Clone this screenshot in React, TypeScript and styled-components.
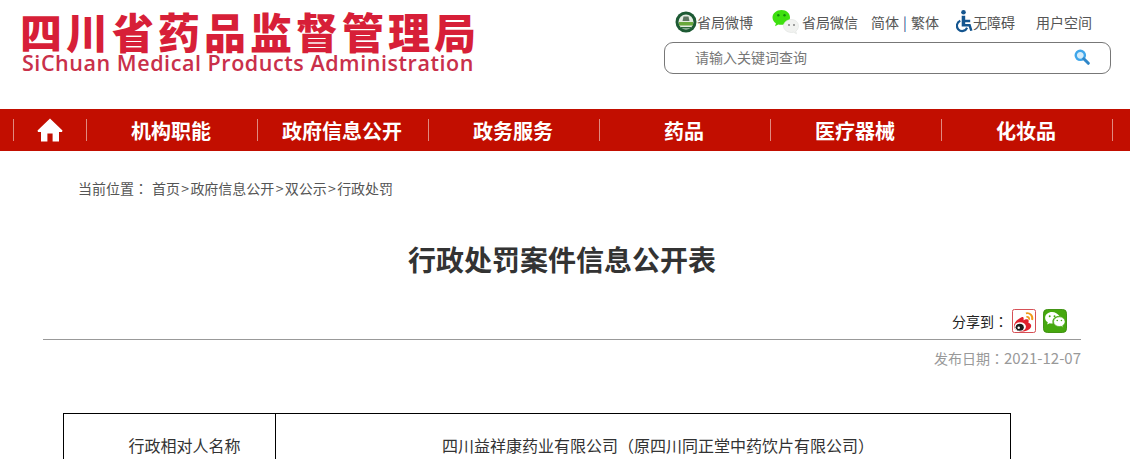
import React from 'react';
import styled, { createGlobalStyle } from 'styled-components';

const GlobalStyle = createGlobalStyle`
  html, body {
    margin: 0;
    padding: 0;
    background: #fff;
    overflow: hidden;
    font-family: "Noto Sans CJK SC", "Liberation Sans", sans-serif;
  }
`;

const Page = styled.div`
  width: 1130px;
  height: 459px;
  overflow: hidden;
`;

const Header = styled.header`
  height: 109px;
  display: flex;
  justify-content: space-between;
  padding: 13px 19px 0 20px;
  box-sizing: border-box;
`;

const Logo = styled.div`
  display: flex;
  flex-direction: column;
  color: #d71f38;
  white-space: nowrap;
`;

const LogoTitle = styled.div`
  font-size: 42px;
  line-height: 36px;
  font-weight: 900;
  letter-spacing: 4px;
`;

const LogoSub = styled.div`
  font-family: "Open Sans", sans-serif;
  font-size: 21.5px;
  line-height: 22px;
  font-weight: 600;
  letter-spacing: 0.55px;
  color: #c9304a;
  margin-top: 3px;
  padding-left: 2px;
`;

const Tools = styled.div`
  width: 447px;
  display: flex;
  flex-direction: column;
`;

const LinkRow = styled.div`
  height: 29px;
  padding-bottom: 12px;
  box-sizing: border-box;
  display: flex;
  align-items: center;
  font-size: 14px;
  color: #555;
  white-space: nowrap;
`;

const ToolLink = styled.span<{ $left: number; $gap?: number }>`
  display: flex;
  align-items: center;
  gap: ${(p) => p.$gap ?? 0}px;
  margin-left: ${(p) => p.$left}px;
`;

const Pipe = styled.span`
  color: #1f4e8c;
  width: 12px;
  text-align: center;
`;

const SearchBox = styled.div`
  height: 32px;
  box-sizing: border-box;
  border: 1px solid #777;
  border-radius: 9px;
  display: flex;
  align-items: center;
  justify-content: space-between;
  padding: 0 20px 2px 30px;
  font-size: 14px;
  color: #777;
`;

const NavBar = styled.nav`
  height: 42px;
  background: #c20e00;
  display: flex;
  align-items: center;
  padding-left: 13px;
`;

const NavItem = styled.div<{ $width: number }>`
  width: ${(p) => p.$width}px;
  height: 22px;
  flex: none;
  display: flex;
  align-items: center;
  justify-content: center;
  border-left: 1px solid #e08a80;
  box-sizing: border-box;
  padding-right: 2px;
  color: #fff;
  font-size: 20px;
  font-weight: 700;
  & > svg {
    margin-left: 2px;
  }
  &:last-child {
    width: 1px;
    padding: 0;
  }
`;

const Main = styled.main`
  display: flex;
  flex-direction: column;
`;

const Crumbs = styled.div`
  margin-top: 28px;
  padding-left: 78px;
  font-size: 14px;
  line-height: 19px;
  color: #555;
`;

const CrumbLabel = styled.span`
  margin-right: 4px;
`;

const CrumbSep = styled.span`
  padding: 0 1.3px;
`;

const Punct = styled.span`
  font-family: "Noto Sans CJK TC", sans-serif;
`;

const Title = styled.h1`
  margin: 42px 6px 0 0;
  text-align: center;
  font-size: 28px;
  line-height: 38px;
  font-weight: 700;
  color: #333;
`;

const ShareRow = styled.div`
  margin: 25px 49px 0 43px;
  height: 36px;
  padding-right: 14px;
  box-sizing: content-box;
  border-bottom: 1px solid #999;
  display: flex;
  align-items: center;
  justify-content: flex-end;
  gap: 7px;
  font-size: 14px;
  color: #222;
`;

const ShareLabel = styled.span`
  margin-right: -3px;
`;

const DateLine = styled.div`
  margin: 8px 49px 0 0;
  display: flex;
  justify-content: flex-end;
  align-items: baseline;
  font-size: 14px;
  line-height: 20px;
  color: #999;
`;

const DateValue = styled.span`
  font-size: 15px;
`;

const Table = styled.table`
  margin: 45px 0 0 63px;
  width: 948px;
  border-collapse: collapse;
  table-layout: fixed;
`;

const Cell = styled.td<{ $width?: number }>`
  width: ${(p) => (p.$width ? `${p.$width}px` : 'auto')};
  height: 66px;
  border: 1px solid #000;
  text-align: center;
  font-size: 16px;
  color: #333;
  padding: 0 0 3px 30px;
  box-sizing: border-box;
`;

const HomeIcon = () => (
  <svg width="26" height="24" viewBox="0 0 26 24">
    <path
      fill="#fff"
      d="M13 0.5 L25.5 12.5 L25 14 L22 14 L22 23.5 L15.6 23.5 L15.6 15.5 L10.4 15.5 L10.4 23.5 L4 23.5 L4 14 L1 14 L0.5 12.5 Z"
    />
  </svg>
);

const BureauBadge = () => (
  <svg width="22" height="22" viewBox="0 0 22 22">
    <circle cx="11" cy="11" r="10.5" fill="#1d5a34" />
    <circle cx="11" cy="11" r="7.5" fill="#e4ece2" />
    <path d="M8.500 5.500h5l1 4.500h-7z" fill="#5c7560" />
    <rect x="4" y="11" width="14" height="3.500" fill="#69a83c" />
    <path d="M6 16h10v1.500H6z" fill="#2c6a3e" />
  </svg>
);

const WechatBubbles = () => (
  <svg width="28" height="26" viewBox="0 0 28 26">
    <path fill="#3ee00f" d="M9.500 1C4.500 1 .5 4.300.5 8.400c0 2.400 1.300 4.400 3.400 5.800l-.8 3 3.200-1.800c1 .3 1.800.4 2.700.4 5 0 9-3.300 9-7.400S14.500 1 9.500 1z" />
    <circle cx="6.300" cy="6.300" r="1.200" fill="#138a0a" />
    <circle cx="12.500" cy="6.300" r="1.200" fill="#138a0a" />
    <path fill="#f1f2f0" stroke="#dfe3df" strokeWidth="0.600" d="M19.500 10.500c-4.400 0-8 2.900-8 6.500s3.600 6.500 8 6.500c.8 0 1.500-.1 2.200-.3l2.800 1.600-.7-2.600c1.700-1.200 2.700-3.100 2.700-5.200 0-3.600-3-6.500-7-6.500z" />
    <circle cx="17" cy="16" r="0.900" fill="#777" />
    <circle cx="22" cy="16" r="0.900" fill="#777" />
  </svg>
);

const AccessIcon = () => (
  <svg width="17" height="23" viewBox="0 0 17 23">
    <circle cx="7.500" cy="2.300" r="2.300" fill="#14558f" />
    <path fill="#14558f" d="M5.700 5.800h3.500v4h5v2.400H9.200v1.900h5.300l2 6.300-2.300.7-1.500-4.600H5.700z" />
    <path fill="none" stroke="#14558f" strokeWidth="2.200" d="M4.300 10.800a5.300 5.300 0 1 0 6.800 7" />
  </svg>
);

const SearchIcon = () => (
  <svg width="16" height="16" viewBox="0 0 16 16">
    <circle cx="6.300" cy="6.300" r="4.600" fill="#d5ecfa" stroke="#3fa6ea" strokeWidth="2.400" />
    <path d="M9.800 9.800L14.300 14.300" stroke="#2f86c8" strokeWidth="3" strokeLinecap="round" />
  </svg>
);

const WeiboShare = () => (
  <svg width="24" height="24" viewBox="0 0 25 25">
    <rect x="0.500" y="0.500" width="24" height="24" rx="2" fill="#fff" stroke="#d3444a" />
    <path fill="#e0202c" d="M10 8.500c-3.500 1.300-8.500 6-8 10 .4 3 4.500 5 8.500 5 5 0 9.500-2.700 9.500-6 0-2-2-2.800-3-3.200.6-1.500.5-2.800-.5-3.300-1.300-.6-3.500.3-4.500.8.300-1.500.2-2.700-.3-3.100-.4-.4-1-.5-1.700-.2z" />
    <ellipse cx="8.500" cy="18.500" rx="6" ry="4.800" fill="#fff" />
    <ellipse cx="8" cy="19" rx="4.300" ry="3.700" fill="#1c1c1c" />
    <circle cx="7" cy="19.500" r="1.300" fill="#fff" />
    <path fill="none" stroke="#f09a1a" strokeWidth="2" d="M14.500 4.500c4-1 7.500 2.500 6.500 7" />
    <path fill="none" stroke="#f09a1a" strokeWidth="1.800" d="M15 8.200c2-.4 3.200 1 2.800 3" />
  </svg>
);

const WechatShare = () => (
  <svg width="24" height="24" viewBox="0 0 25 25">
    <rect width="24" height="24" x="0.500" y="0.500" rx="4" fill="#46a80e" stroke="#3d8f10" />
    <path fill="#fff" d="M9.500 3C5.400 3 2.200 5.700 2.200 9.100c0 2 1.100 3.700 2.800 4.800l-.7 2.300 2.700-1.400c.8.200 1.600.3 2.500.3h.6c-.2-.6-.3-1.200-.3-1.800 0-3.300 3-5.900 6.800-5.900h.5C15.400 4.900 12.700 3 9.500 3z" />
    <path fill="#fff" stroke="#46a80e" strokeWidth="0.700" d="M23 13.200c0-2.900-2.700-5.100-6-5.100s-6 2.200-6 5.100 2.700 5.100 6 5.100c.7 0 1.300-.1 1.900-.3l2.200 1.200-.6-1.900c1.500-.9 2.500-2.400 2.500-4.100z" />
    <circle cx="7" cy="7.600" r="1" fill="#46a80e" />
    <circle cx="12" cy="7.600" r="1" fill="#46a80e" />
    <circle cx="14.800" cy="12" r="0.800" fill="#46a80e" />
    <circle cx="19.200" cy="12" r="0.800" fill="#46a80e" />
  </svg>
);

const navLabels = ['机构职能', '政府信息公开', '政务服务', '药品', '医疗器械', '化妆品'];

const App = () => (
  <Page>
    <GlobalStyle />
    <Header>
      <Logo>
        <LogoTitle>四川省药品监督管理局</LogoTitle>
        <LogoSub>SiChuan Medical Products Administration</LogoSub>
      </Logo>
      <Tools>
        <LinkRow>
          <ToolLink $left={11}>
            <BureauBadge />
            省局微博
          </ToolLink>
          <ToolLink $left={19} $gap={2}>
            <WechatBubbles />
            省局微信
          </ToolLink>
          <ToolLink $left={13}>
            简体<Pipe>|</Pipe>繁体
          </ToolLink>
          <ToolLink $left={17}>
            <AccessIcon />
            无障碍
          </ToolLink>
          <ToolLink $left={21}>用户空间</ToolLink>
        </LinkRow>
        <SearchBox>
          请输入关键词查询
          <SearchIcon />
        </SearchBox>
      </Tools>
    </Header>
    <NavBar>
      <NavItem $width={73}>
        <HomeIcon />
      </NavItem>
      {navLabels.map((label) => (
        <NavItem key={label} $width={171}>
          {label}
        </NavItem>
      ))}
      <NavItem $width={1} />
    </NavBar>
    <Main>
      <Crumbs>
        <CrumbLabel>当前位置<Punct>：</Punct></CrumbLabel>首页<CrumbSep>&gt;</CrumbSep>政府信息公开<CrumbSep>&gt;</CrumbSep>双公示<CrumbSep>&gt;</CrumbSep>行政处罚
      </Crumbs>
      <Title>行政处罚案件信息公开表</Title>
      <ShareRow>
        <ShareLabel>分享到<Punct>：</Punct></ShareLabel>
        <WeiboShare />
        <WechatShare />
      </ShareRow>
      <DateLine>
        <span>发布日期<Punct>：</Punct></span>
        <DateValue>2021-12-07</DateValue>
      </DateLine>
      <Table>
        <tbody>
          <tr>
            <Cell $width={212}>行政相对人名称</Cell>
            <Cell>四川益祥康药业有限公司<Punct>（</Punct>原四川同正堂中药饮片有限公司<Punct>）</Punct></Cell>
          </tr>
        </tbody>
      </Table>
    </Main>
  </Page>
);

export default App;
